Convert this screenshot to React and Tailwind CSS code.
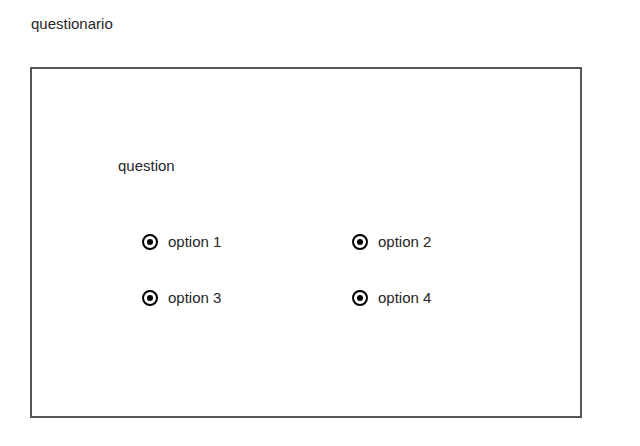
import React from "react";

const options = ["option 1", "option 2", "option 3", "option 4"];

const Radio = ({ label }) => (
  <div className="flex items-center gap-[10px] h-4">
    <span className="w-[16px] h-[16px] rounded-full border-2 border-black flex items-center justify-center">
      <span className="w-[6px] h-[6px] rounded-full bg-black" />
    </span>
    <span>{label}</span>
  </div>
);

export default function App() {
  return (
    <div
      className="w-[640px] h-[446px] bg-white text-[15px] leading-4 text-[#262626]"
      style={{ fontFamily: '"Liberation Sans", Arial, sans-serif' }}
    >
      <div className="pt-[16px] pl-[31px]">questionario</div>
      <div className="ml-[30px] mt-[35px] w-[552px] h-[351px] border-2 border-[#555]">
        <div className="pt-[89px] pl-[86px]">
          <div>question</div>
          <div className="mt-[60px] ml-[24px] grid grid-cols-[210px_210px] gap-y-[40px]">
            {options.map((o) => (
              <Radio key={o} label={o} />
            ))}
          </div>
        </div>
      </div>
    </div>
  );
}
